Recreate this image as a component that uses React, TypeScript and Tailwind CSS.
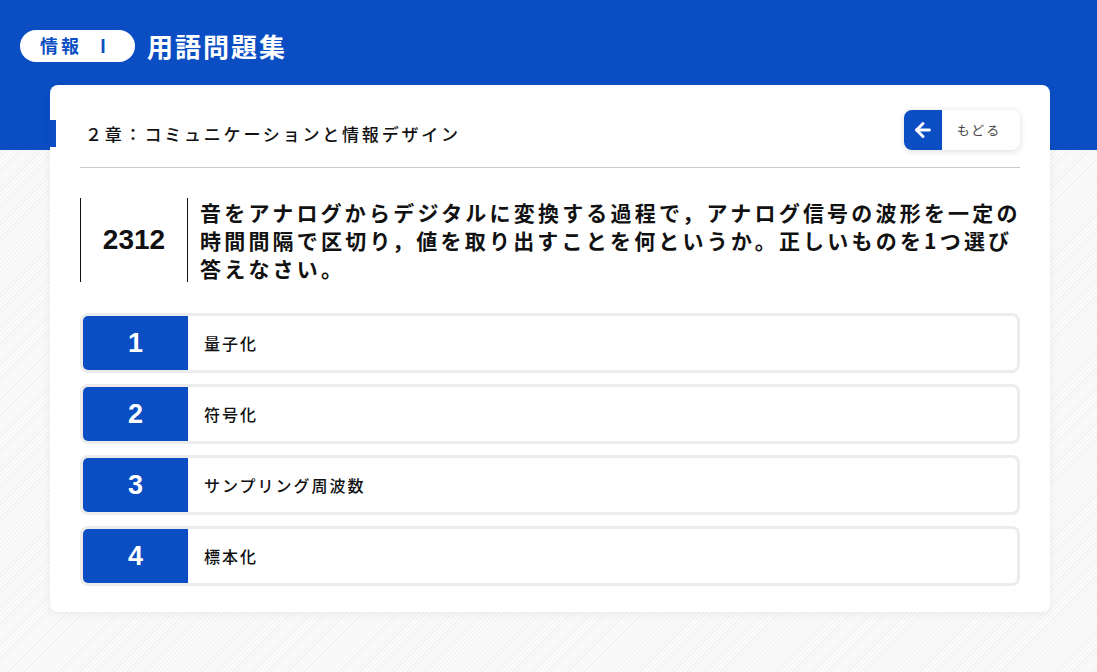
import { ArrowLeft } from 'lucide-react';

const choices = [
  { no: 1, label: '量子化' },
  { no: 2, label: '符号化' },
  { no: 3, label: 'サンプリング周波数' },
  { no: 4, label: '標本化' },
];

const questionLines = [
  '音をアナログからデジタルに変換する過程で，アナログ信号の波形を一定の',
  '時間間隔で区切り，値を取り出すことを何というか。正しいものを1つ選び',
  '答えなさい。',
];

function BackButton() {
  return (
    <button className="flex h-[40px] w-[116px] overflow-hidden rounded-[8px] bg-white shadow-[0_1px_6px_rgba(0,0,0,0.15)]">
      <span className="flex h-full w-[38px] items-center justify-center bg-[#0b4ec3]">
        <ArrowLeft className="h-[22px] w-[22px] text-white" strokeWidth={3.2} />
      </span>
      <span className="flex flex-1 items-center justify-center pr-[4px] text-[13px] tracking-[2px] text-[#444]">
        もどる
      </span>
    </button>
  );
}

function Choice({ no, label }: { no: number; label: string }) {
  return (
    <div className="flex h-[60px] overflow-hidden rounded-[8px] border-[3px] border-[#ececec] bg-white">
      <div className="flex w-[105px] items-center justify-center bg-[#0b4ec3] font-['Liberation_Sans',sans-serif] text-[27px] font-bold text-white">
        {no}
      </div>
      <div className="flex items-center pl-[16px] text-[16px] font-medium tracking-[2px] text-[#111]">
        {label}
      </div>
    </div>
  );
}

export default function App() {
  return (
    <div className="min-h-screen bg-[repeating-linear-gradient(135deg,#f2f2f2_0,#f2f2f2_1px,#fbfbfb_1px,#fbfbfb_3px)] pb-[60px] font-['Noto_Sans_CJK_JP','Liberation_Sans',sans-serif]">
      <header className="h-[150px] bg-[#0b4ec3] px-[20px] pt-[26px]">
        <div className="flex items-center gap-[12px]">
          <span className="flex h-[32px] w-[115px] items-center rounded-full bg-white pl-[20px] text-[18px] font-bold tracking-[3px] text-[#0b4ec3]">
            <span>情報</span>
            <span className="ml-[12px]">Ⅰ</span>
          </span>
          <h1 className="text-[26px] font-bold tracking-[2px] text-white">用語問題集</h1>
        </div>
      </header>

      <main className="ml-[50px] -mt-[65px] w-[1000px] rounded-[8px] bg-white px-[30px] pt-[25px] pb-[26px] shadow-[0_2px_10px_rgba(0,0,0,0.06)]">
        <div className="flex items-start justify-between">
          <h2 className="-ml-[30px] mt-[10px] flex h-[27px] items-center border-l-[6px] border-[#0b4ec3] pl-[29px] text-[17px] font-medium tracking-[2.8px] text-[#111]">
            ２章：コミュニケーションと情報デザイン
          </h2>
          <BackButton />
        </div>

        <div className="mt-[17px] h-px bg-[#cccccc]" />

        <div className="mt-[30px] flex">
          <div className="flex w-[108px] shrink-0 items-center justify-center border-x border-[#111] font-['Liberation_Sans',sans-serif] text-[28px] font-bold text-[#111]">
            2312
          </div>
          <p className="whitespace-nowrap pl-[12px] text-[21px] font-bold leading-[28px] tracking-[3.2px] text-[#111]">
            {questionLines.map((line, i) => (
              <span key={i} className="block">
                {line}
              </span>
            ))}
          </p>
        </div>

        <div className="mt-[31px] flex flex-col gap-[11px]">
          {choices.map((c) => (
            <Choice key={c.no} no={c.no} label={c.label} />
          ))}
        </div>
      </main>
    </div>
  );
}
